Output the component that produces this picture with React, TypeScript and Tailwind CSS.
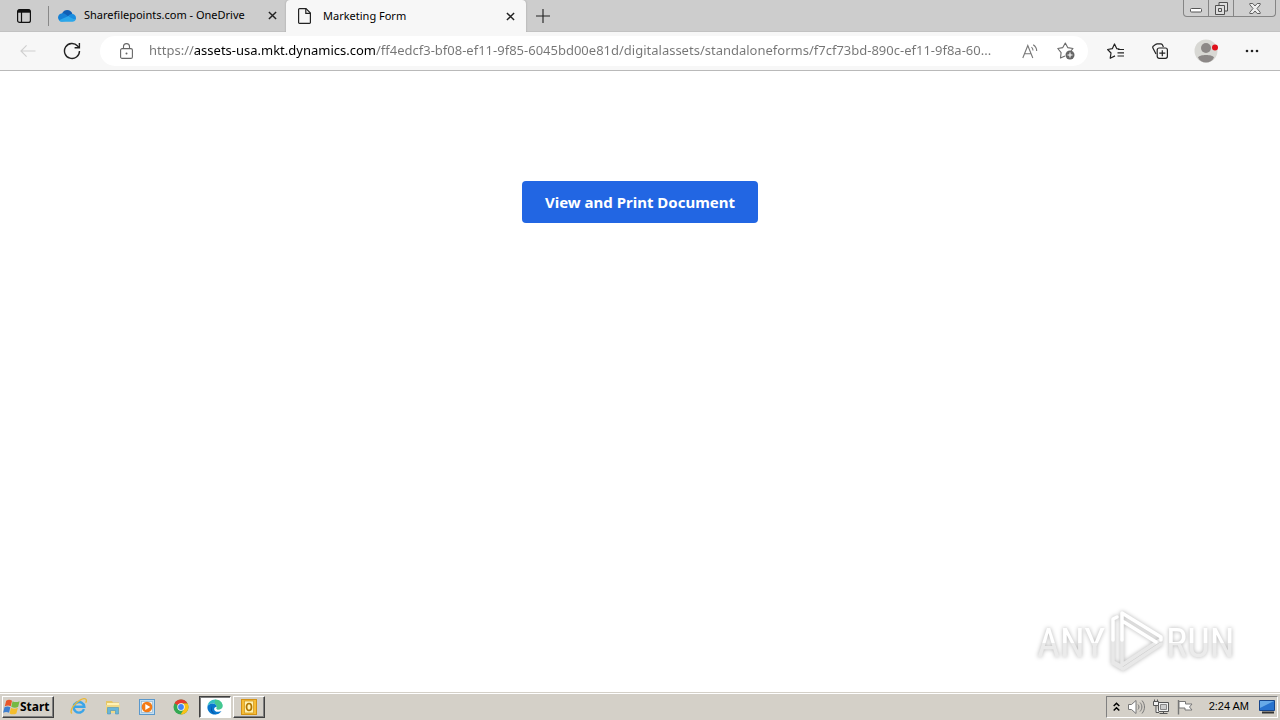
import type { ReactNode } from "react";

const PAGE_URL =
  "https://assets-usa.mkt.dynamics.com/ff4edcf3-bf08-ef11-9f85-6045bd00e81d/digitalassets/standaloneforms/f7cf73bd-890c-ef11-9f8a-60...";

function CloseIcon() {
  return (
    <svg width="9" height="9" viewBox="0 0 10 10" fill="none" stroke="#222" strokeWidth="1.6">
      <path d="M1 1l8 8M9 1L1 9" />
    </svg>
  );
}

function IconButton({ label, className, children }: { label: string; className?: string; children: ReactNode }) {
  return (
    <button type="button" aria-label={label} className={`flex h-8 shrink-0 items-center justify-center ${className ?? ""}`}>
      {children}
    </button>
  );
}

function TabStrip() {
  return (
    <div className="flex h-8 shrink-0 items-stretch border-b border-[#c2c2c2] bg-[#cdcdcd] text-[11px] text-black">
      <IconButton label="Tab actions" className="w-12">
        <svg width="14" height="14" viewBox="0 0 14 14" fill="none" stroke="#111" strokeWidth="1.2">
          <rect x="0.6" y="0.6" width="12.8" height="12.8" rx="2" />
          <path d="M1 2.2h12" strokeWidth="3" />
          <path d="M4.5 3v10" />
        </svg>
      </IconButton>
      <div className="my-auto h-5 w-px bg-[#888]" />
      <div className="flex w-[237px] items-center pr-1 pl-[9px]">
        <svg className="mr-2 shrink-0" width="18" height="12" viewBox="0 0 18 12">
          <path d="M4 3.4C5.2 1.2 7 0 9.2 0c2.600 0 4.700 1.800 5.300 4.200L9 7z" fill="#0f5fb5" />
          <path d="M4.200 3.200c1.500 0 2.600.500 3.700 1.200L14.500 10 4 11.500C1.800 11.500 0 9.800 0 7.500 0 5.100 1.900 3.300 4.200 3.200z" fill="#1681d5" />
          <path d="M10 6.300c1.200-1.500 2.500-2.200 4.200-2.200C16.500 4.200 18 5.900 18 8c0 .8-.2 1.500-.6 2.100L13 9z" fill="#1a8de0" />
          <path d="M1 10.200L10 6.200l7.500 3.900c-.6 1-1.600 1.700-3 1.700H4.200C2.800 11.800 1.700 11.200 1 10.200z" fill="#2ba7ea" />
        </svg>
        <button type="button" className="min-w-0 flex-1 text-left whitespace-nowrap">Sharefilepoints.com - OneDrive</button>
        <button type="button" aria-label="Close Sharefilepoints.com - OneDrive" className="flex size-5 items-center justify-center">
          <CloseIcon />
        </button>
      </div>
      <div className="-mb-px flex w-60 items-center rounded-t bg-[#f7f7f7] pr-1.5 pl-3 shadow-[0_0_2px_#999] [clip-path:inset(0_-3px_0_-3px)]">
        <svg className="mr-3 shrink-0" width="13" height="16" viewBox="0 0 13 16" fill="none" stroke="#222" strokeWidth="1.2">
          <path d="M1.500.6H8l4.400 4.400v9.500a.9.9 0 0 1-.9.900h-10a.9.9 0 0 1-.9-.900V1.500a.9.9 0 0 1 .9-.9z" />
          <path d="M7.800.8v4.600h4.400" />
        </svg>
        <button type="button" className="flex-1 text-left whitespace-nowrap">Marketing Form</button>
        <button type="button" aria-label="Close Marketing Form" className="flex size-5 items-center justify-center">
          <CloseIcon />
        </button>
      </div>
      <IconButton label="New tab" className="w-[34px]">
        <svg width="14" height="14" viewBox="0 0 15 15" stroke="#222" strokeWidth="1.200">
          <path d="M7.500 0v15M0 7.500h15" />
        </svg>
      </IconButton>
      <div className="mr-1 ml-auto flex h-[17px] rounded-b border border-t-0 border-[#858585] bg-[#cfcfcf]">
        <button type="button" aria-label="Minimize" className="flex w-[25px] items-center justify-center border-r border-[#858585]">
          <svg className="mt-1" width="12" height="5" viewBox="0 0 12 5" fill="#fff" stroke="#555">
            <rect x="0.500" y="0.500" width="11" height="3.500" rx="1" />
          </svg>
        </button>
        <button type="button" aria-label="Restore" className="flex w-[25px] items-center justify-center border-r border-[#858585]">
          <svg width="13" height="13" viewBox="0 0 13 13" fill="#ddd" stroke="#505050">
            <path d="M4 .5h8.500V9H4z" />
            <path d="M.5 3.500H9.500v9H.5z" />
            <path d="M3.500 6.500h3v3h-3z" />
          </svg>
        </button>
        <button type="button" aria-label="Close window" className="flex w-[41px] items-center justify-center">
          <svg width="12" height="11" viewBox="0 0 12 11" fill="#eee" stroke="#606060">
            <path d="M.8.5h3L6 3 8.200.5h3v1.200L8 5.500l3.200 3.800v1.200h-3L6 8l-2.200 2.500h-3V9.300L4 5.500.8 1.700z" />
          </svg>
        </button>
      </div>
    </div>
  );
}

function Toolbar() {
  return (
    <div className="flex h-[39px] shrink-0 items-center border-b border-[#b9b9b9] bg-[#f7f7f7]">
      <IconButton label="Back" className="ml-3 w-8">
        <svg width="16" height="14" viewBox="0 0 17 14" fill="none" stroke="#cfcfcf" strokeWidth="1.200">
          <path d="M16.500 7H1M7 1L1 7l6 6" />
        </svg>
      </IconButton>
      <IconButton label="Refresh" className="ml-3 w-8">
        <svg width="18" height="18" viewBox="0 0 18 18" fill="none" stroke="#222" strokeWidth="1.400">
          <path d="M16.500 9A7.500 7.500 0 1 1 14.600 4L16 5.500" />
          <path d="M16.400 1v4.800h-4.800" />
        </svg>
      </IconButton>
      <div className="ml-3 flex h-[30px] min-w-0 flex-1 items-center rounded-full bg-white pr-1.5 pl-5">
        <svg className="shrink-0" width="13" height="16" viewBox="0 0 13 16" fill="none" stroke="#666" strokeWidth="1.100">
          <rect x="0.600" y="5.600" width="11.800" height="9.800" rx="1.500" />
          <path d="M3.500 5.500V3.600a3 3 0 0 1 6 0v1.900" />
          <circle cx="6.500" cy="10.500" r="1" fill="#666" stroke="none" />
        </svg>
        <input
          type="text"
          aria-label="Address and search bar"
          defaultValue={PAGE_URL}
          className="ml-4 min-w-0 flex-1 bg-[linear-gradient(to_right,#757575_45px,#000_45px,#000_226px,#757575_226px)] bg-clip-text text-[13px] text-transparent caret-black outline-none"
        />
        <IconButton label="Read aloud" className="w-8">
          <svg width="17" height="15" viewBox="0 0 17 15" fill="none" stroke="#777" strokeWidth="1.100">
            <path d="M.8 14L5.800 1.500 10.800 14M2.600 9.800h6.400" />
            <path d="M9.500 3.200c1 .9 1.500 2 1.500 3.300M11.200.8c2.200 1.500 3.500 3.700 3.500 6.200" />
          </svg>
        </IconButton>
        <IconButton label="Add this page to favorites" className="ml-1 w-8">
          <svg width="18" height="18" viewBox="0 0 18 18" fill="none" stroke="#6b6b6b" strokeWidth="1.100" strokeLinejoin="round">
            <path d="M8 14L3.500 16l.6-5.400L.8 6.500l5-.9L8.300 1l2.400 4.600 5.300.9-2 2.300" />
            <circle cx="13" cy="13" r="4.500" fill="#666" stroke="none" />
            <path d="M13 10.500v5M10.500 13h5" stroke="#fff" />
          </svg>
        </IconButton>
      </div>
      <IconButton label="Favorites" className="ml-3 w-8">
        <svg width="18" height="17" viewBox="0 0 18 17" fill="none" stroke="#222" strokeWidth="1.200" strokeLinejoin="round">
          <path d="M12.500 6.200L9.800 5.700 7.500 1 5.300 5.700l-4.700.8L4 10l-.8 5.300L8 12.900" />
          <path d="M11 6.500h6M10.500 9.800H17M10.500 13H17" />
        </svg>
      </IconButton>
      <IconButton label="Collections" className="ml-3 w-8">
        <svg width="16" height="16" viewBox="0 0 16 16" fill="none" stroke="#222" strokeWidth="1.200">
          <path d="M4 11L1 5.200A1.800 1.800 0 0 1 1.800 2.800L3.500 1.500A3 3 0 0 1 5.200.8h3.500a2 2 0 0 1 1.700 1l1 2.200" />
          <rect x="5.200" y="5" width="10.200" height="10.300" rx="2" />
          <path d="M10.300 7.200v6M7.300 10.200h6" />
        </svg>
      </IconButton>
      <IconButton label="Profile" className="ml-3.5 w-8">
        <svg width="26" height="24" viewBox="0 0 26 24">
          <circle cx="13" cy="12" r="11.500" fill="#d8d8d4" />
          <circle cx="13" cy="9" r="5" fill="#8c8887" />
          <path d="M5 18.500c1-3.500 15-3.500 16 0-1.500 3.300-4.500 5-8 5S6.500 21.800 5 18.500z" fill="#8c8887" />
          <circle cx="22" cy="8.500" r="3" fill="#e0111c" />
        </svg>
      </IconButton>
      <IconButton label="Settings and more" className="mr-3 ml-3.5 w-8">
        <svg width="14" height="4" viewBox="0 0 14 4" fill="#222">
          <circle cx="2" cy="2" r="1.300" />
          <circle cx="7" cy="2" r="1.300" />
          <circle cx="12" cy="2" r="1.300" />
        </svg>
      </IconButton>
    </div>
  );
}

function Watermark() {
  return (
    <svg
      role="img"
      aria-label="ANY RUN"
      className="absolute right-10 bottom-3.5 drop-shadow-[0_0_2px_rgba(0,0,0,0.3)]"
      width="208"
      height="70"
      viewBox="0 0 208 70"
    >
      <defs>
        <linearGradient id="shade" x1="0" y1="0" x2="0" y2="1">
          <stop offset="0.5" stopColor="#fff" />
          <stop offset="0.5" stopColor="#ebebeb" />
        </linearGradient>
      </defs>
      <g fill="url(#shade)" fontFamily="'Liberation Sans Narrow', 'Roboto Condensed', sans-serif" fontSize="40">
        <text x="5" y="49">ANY</text>
        <text x="134" y="49">RUN</text>
      </g>
      <g fill="none" strokeWidth="3.500" strokeLinejoin="round" strokeLinecap="round">
        <path d="M81 32v22l8 4M90 32v24M128 32L90 57M129 36L91 61l-10-6" stroke="#e8e8e8" />
        <path d="M81 32V11l4-2M90 32V5l39 24v3M92 14l32 20" stroke="#fff" />
      </g>
    </svg>
  );
}

function StartFlag() {
  return (
    <svg width="17" height="16" viewBox="0 0 16 15">
      <path d="M3 1.500c2-1.200 3.700-1 5.500 0L7.300 6.900C5.600 5.900 3.800 6 1.700 6.900z" fill="#e8562a" />
      <path d="M9 2c2 1.200 4 1.200 6.600 0l-1.300 5.300c-2 1.200-4.300 1.200-6.500 0z" fill="#75b943" />
      <path d="M1.400 7.700c1.900-1 3.700-1 5.500 0L5.700 13c-1.700-1-3.600-1-5.600 0z" fill="#3e7fd0" />
      <path d="M7.500 8.200c2 1.200 4 1.200 6.500 0l-1.400 5.300c-2 1.200-4.400 1.200-6.400 0z" fill="#f4bd2c" />
    </svg>
  );
}

function TaskButton({ label, children }: { label: string; children: ReactNode }) {
  return (
    <button type="button" aria-label={label} className="flex h-[22px] w-[34px] items-center justify-center">
      {children}
    </button>
  );
}

function Taskbar() {
  return (
    <footer className="flex h-7 shrink-0 items-center border-t border-[#d4d0c8] bg-[#d4d0c8] px-0.5 text-black shadow-[inset_0_1px_#fff]">
      <button
        type="button"
        className="flex h-[22px] w-[52px] items-center border border-t-white border-r-[#404040] border-b-[#404040] border-l-white text-xs font-bold shadow-[inset_-1px_-1px_#808080]"
      >
        <StartFlag />
        Start
      </button>
      <nav aria-label="Taskbar" className="ml-2 flex">
        <TaskButton label="Internet Explorer">
          <svg width="18" height="17" viewBox="0 0 18 17" fill="none">
            <path d="M14 11.200A5.300 5.300 0 1 1 14.300 8.700H5" stroke="#3ba5e8" strokeWidth="2.400" />
            <path d="M2 15.500C-1.200 13 5 4.500 10.500 1.800c5-2.500 7-.5 5.200 3" stroke="#e8b93c" strokeWidth="1.400" />
          </svg>
        </TaskButton>
        <TaskButton label="File Explorer">
          <svg width="16" height="16" viewBox="0 0 16 16">
            <path d="M1 2h6l1 1.500h6V14H1z" fill="#e5c665" />
            <path d="M2 4h12v3H2z" fill="#fff2b5" />
            <path d="M1 6h14l-1 8H1.500z" fill="#f0d987" />
            <path d="M2.500 15V8.500h11V15h-3v-3.500h-5V15z" fill="#68b6da" stroke="#4b94b8" strokeWidth="0.600" />
          </svg>
        </TaskButton>
        <TaskButton label="Media Player">
          <svg width="16" height="16" viewBox="0 0 16 16">
            <rect x="0.500" y="0.500" width="15" height="15" fill="#c3def1" stroke="#5a98cc" />
            <rect x="2.500" y="2.500" width="11" height="11" fill="#f8efe4" stroke="#83b0d3" strokeWidth="0.600" />
            <circle cx="8" cy="8" r="5.300" fill="#f37a15" />
            <path d="M6.300 5v6l5-3z" fill="#fff" />
          </svg>
        </TaskButton>
        <TaskButton label="Google Chrome">
          <svg width="16" height="16" viewBox="0 0 16 16">
            <circle cx="8" cy="8" r="7.500" fill="#33a852" />
            <path d="M8 8L1.500 4.200A7.500 7.500 0 0 1 14.500 4.500H8z" fill="#e63b2e" />
            <path d="M8 8V4.500h6.600A7.500 7.500 0 0 1 7.600 15.500L11 10z" fill="#fbc116" />
            <circle cx="8" cy="8" r="3.700" fill="#fff" />
            <circle cx="8" cy="8" r="2.900" fill="#4285f4" />
          </svg>
        </TaskButton>
        <button
          type="button"
          aria-label="Microsoft Edge"
          className="ml-px flex h-[22px] w-8 items-center justify-center border border-t-[#404040] border-r-white border-b-white border-l-[#404040] bg-white shadow-[inset_1px_1px_#808080]"
        >
          <svg width="16" height="16" viewBox="0 0 16 16">
            <path d="M.4 7.500C.8 3.300 4 .4 8 .4c4.500 0 7.600 3 7.600 6.300 0 2.500-1.800 3.800-4 3.800-1.800 0-2.500-.7-2-1.500C10.400 7 8.500 4.500 5.800 4.500 3 4.500.8 5.800.4 7.500z" fill="#35c1c5" />
            <path d="M8 .4c4.500 0 7.600 3 7.600 6.300 0 2.500-1.800 3.800-4 3.800-1.800 0-2.500-.7-2-1.500.6-1.300-.2-3-1.600-4z" fill="#4dcb78" opacity=".7" />
            <path d="M.4 7.800C.7 5.800 3 4.500 5.500 4.500c2.300 0 4.200 1.600 4.200 3.500-3-1-4.200 4.500 1.300 4.800 1.300.1 2.500-.3 3.500-.8-1.600 2.300-3.800 3.600-6.500 3.600C3.500 15.600.1 12 .4 7.800z" fill="#0877ce" />
            <path d="M5.500 6.500c-2 3-.5 7.500 4 8.800-4.800-.2-7.300-5-4-8.800z" fill="#0b4c9b" />
          </svg>
        </button>
        <button
          type="button"
          aria-label="Outlook"
          className="ml-0.5 flex h-[22px] w-8 items-center justify-center border border-t-white border-r-[#404040] border-b-[#404040] border-l-white shadow-[inset_-1px_-1px_#808080]"
        >
          <svg width="16" height="16" viewBox="0 0 16 16" fill="none">
            <rect x="0.500" y="0.500" width="15" height="15" fill="#f6bd35" stroke="#d39214" />
            <rect x="3.500" y="2" width="9" height="12" fill="#fff3b4" stroke="#d49b22" strokeWidth="0.800" />
            <ellipse cx="8" cy="8" rx="2.500" ry="3.500" stroke="#b17600" strokeWidth="1.700" />
          </svg>
        </button>
      </nav>
      <div className="ml-auto flex h-[22px] items-center border border-t-[#808080] border-r-white border-b-white border-l-[#808080] pr-0.5 pl-1.5">
        <button type="button" aria-label="Show hidden icons">
          <svg width="7" height="10" viewBox="0 0 7 10" fill="none" stroke="#000" strokeWidth="1.500">
            <path d="M.7 4l2.800-2.800L6.300 4M.7 8.500l2.800-2.800 2.800 2.800" />
          </svg>
        </button>
        <button type="button" aria-label="Volume" className="ml-2">
          <svg width="17" height="16" viewBox="0 0 17 16" fill="none" stroke="#777">
            <path d="M.5 5.500h3L8 1.500v13l-4.500-4h-3z" fill="#fff" />
            <path d="M10 5.500c1.300 1.500 1.300 3.500 0 5M12 3.500c2.500 2.700 2.500 6.300 0 9M14 1.500c3.300 4 3.300 9 0 13" />
          </svg>
        </button>
        <button type="button" aria-label="Network" className="ml-2">
          <svg width="16" height="16" viewBox="0 0 16 16" stroke="#555" fill="#f1f1f1">
            <path d="M5.500 3.500h10v9h-10z" />
            <path d="M7.500 5.500h6v5h-6z" fill="#ccc" stroke="#888" />
            <path d="M.5 2.500h5v4h-5zM1.500.5v2M4.500.5v2M3 6.500v7h3M6.500 14.500h8M10.500 12.500v2" />
          </svg>
        </button>
        <button type="button" aria-label="Action Center" className="ml-2">
          <svg width="16" height="16" viewBox="0 0 16 16" fill="#fff" stroke="#777">
            <path d="M1.500 1v14.500" strokeWidth="1.400" />
            <path d="M2 2.500h6.500V5H15l-2.500 3L15 11H8V9H2z" />
          </svg>
        </button>
        <time className="ml-4 font-['Liberation_Sans',sans-serif] text-[11px] whitespace-nowrap">2:24 AM</time>
        <button type="button" aria-label="Show desktop" className="ml-2.5">
          <svg width="16" height="14" viewBox="0 0 16 14">
            <path d="M.5.5h15v10H.5z" fill="#2873cf" stroke="#16458b" />
            <path d="M1 1h14L1 8z" fill="#67aae8" />
            <path d="M3 12.500h12" stroke="#333" strokeWidth="2" />
          </svg>
        </button>
      </div>
    </footer>
  );
}

export default function App() {
  return (
    <div className="flex h-screen flex-col overflow-hidden bg-white font-['Noto_Sans','Open_Sans',sans-serif]">
      <TabStrip />
      <Toolbar />
      <main className="relative flex flex-1 items-start justify-center pt-[110px]">
        <button type="button" className="h-[42px] rounded bg-[#2266e3] px-[23px] text-[15px] font-bold text-white">
          View and Print Document
        </button>
        <Watermark />
      </main>
      <Taskbar />
    </div>
  );
}
